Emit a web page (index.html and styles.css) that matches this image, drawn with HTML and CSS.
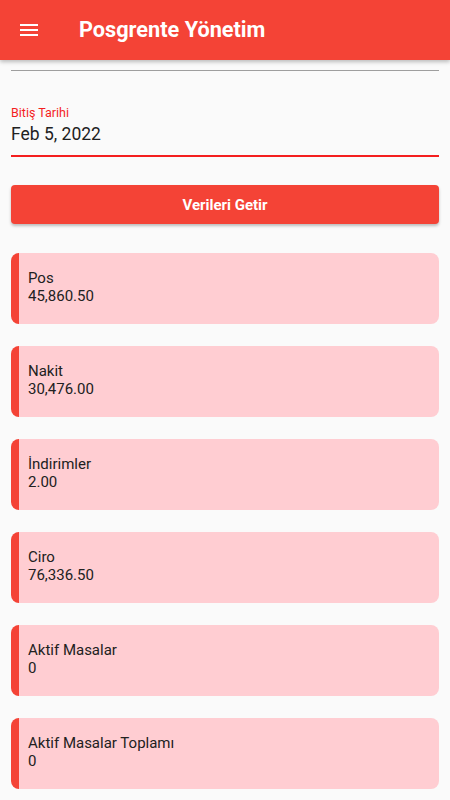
FILE: index.html
```html
<!DOCTYPE html>
<html lang="tr">
<head>
    <meta charset="UTF-8" />
    <title>Posgrente Yönetim</title>
    <link rel="stylesheet" href="styles.css">
</head>
<body>
    <header class="appbar">
        <span class="menu-btn">
            <svg width="24" height="24" viewBox="0 0 24 24"><path d="M3 18h18v-2H3v2zm0-5h18v-2H3v2zm0-7v2h18V6H3z" fill="#fff"/></svg>
        </span>
        <h1 class="appbar-title">Posgrente Yönetim</h1>
    </header>

    <main class="content">
        <div class="field-prev"></div>

        <div class="field">
            <label class="field-label">Bitiş Tarihi</label>
            <div class="field-value">Feb 5, 2022</div>
        </div>

        <button class="fetch-btn">Verileri Getir</button>

        <ul class="stats">
            <li class="stat">
                <div class="stat-name">Pos</div>
                <div class="stat-value">45,860.50</div>
            </li>
            <li class="stat">
                <div class="stat-name">Nakit</div>
                <div class="stat-value">30,476.00</div>
            </li>
            <li class="stat">
                <div class="stat-name">İndirimler</div>
                <div class="stat-value">2.00</div>
            </li>
            <li class="stat">
                <div class="stat-name">Ciro</div>
                <div class="stat-value">76,336.50</div>
            </li>
            <li class="stat">
                <div class="stat-name">Aktif Masalar</div>
                <div class="stat-value">0</div>
            </li>
            <li class="stat">
                <div class="stat-name">Aktif Masalar Toplamı</div>
                <div class="stat-value">0</div>
            </li>
        </ul>
    </main>
</body>
</html>
```

FILE: styles.css
```css
*{
    margin: 0;
    padding: 0;
    box-sizing: border-box;
}
body,html{
    width: 100%;
    height: 100%;
    overflow: hidden;
}
body{
    background: #fafafa;
    font-family: Roboto, 'Noto Sans', sans-serif;
    color: #212121;
}
.appbar{
    height: 60px;
    background: #f44336;
    display: flex;
    align-items: center;
    box-shadow: 0 2px 4px rgba(0,0,0,.25);
    position: relative;
    z-index: 1;
}
.menu-btn{
    display: flex;
    margin-left: 17px;
    width: 24px;
    height: 24px;
}
.appbar-title{
    margin-left: 38px;
    color: #fff;
    font-size: 21.7px;
    font-weight: bold;
    line-height: 24px;
}
.content{
    padding: 0 11px;
}
.field-prev{
    height: 11px;
    border-bottom: 1px solid #9e9e9e;
}
.field{
    margin-top: 33px;
    border-bottom: 2px solid #f41e1e;
    padding-bottom: 10px;
}
.field-label{
    display: block;
    color: #f41e1e;
    font-size: 12.5px;
    line-height: 17px;
}
.field-value{
    font-size: 17.5px;
    line-height: 22px;
    margin-top: 2px;
}
.fetch-btn{
    display: block;
    width: 100%;
    height: 39px;
    margin-top: 28px;
    border: none;
    border-radius: 4px;
    background: #f44336;
    color: #fff;
    font-family: Roboto, sans-serif;
    font-size: 15px;
    font-weight: bold;
    box-shadow: 0 2px 3px rgba(0,0,0,.25);
}
.stats{
    list-style: none;
    margin-top: 29px;
    display: flex;
    flex-direction: column;
    gap: 22px;
}
.stat{
    background: #ffcdd2;
    border-left: 8px solid #f44336;
    border-radius: 8px;
    padding: 16px 9px 19px;
    font-size: 15px;
    line-height: 18px;
}
```
